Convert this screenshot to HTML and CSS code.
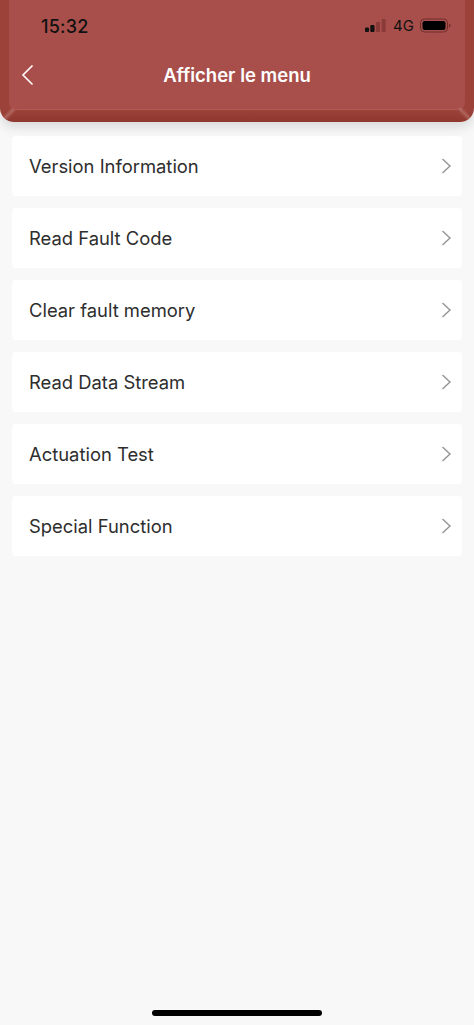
FILE: index.html
```html
<!DOCTYPE html>
<html lang="fr">
<head>
<meta charset="utf-8">
<title>Afficher le menu</title>
<link rel="stylesheet" href="styles.css">
</head>
<body>
<div class="app">
  <header class="header">
    <div class="face">
      <div class="status">
        <span class="time">15:32</span>
        <div class="status-right">
          <svg class="signal" width="21" height="14" viewBox="0 0 21 14">
            <rect x="0" y="8.500" width="4" height="4.500" rx="1" fill="#111"/>
            <rect x="5.300" y="6" width="4.200" height="7" rx="1" fill="#111"/>
            <rect x="11" y="3" width="4" height="10" rx="1" fill="#8a3a38"/>
            <rect x="16.700" y="0" width="4" height="13" rx="1" fill="#8a3a38"/>
          </svg>
          <span class="net">4G</span>
          <svg class="battery" width="31" height="15" viewBox="0 0 31 15">
            <rect x="0.500" y="1" width="27" height="13" rx="4" fill="none" stroke="#6f2e2c" stroke-width="1"/>
            <rect x="2.500" y="3" width="23" height="9" rx="2.300" fill="#000"/>
            <path d="M29 5.500c1 .4 1.500 1 1.500 2s-.5 1.600-1.500 2z" fill="#6f2e2c"/>
          </svg>
        </div>
      </div>
      <nav class="nav">
        <svg class="back" width="14" height="22" viewBox="0 0 14 22">
          <path d="M11.500 1.500 2 11l9.500 9.500" fill="none" stroke="#fff" stroke-width="1.600"/>
        </svg>
        <h1 class="title">Afficher le menu</h1>
      </nav>
    </div>
  </header>
  <main class="list">
    <div class="row"><span>Version Information</span><svg class="chev" width="11" height="16" viewBox="0 0 11 16"><path d="M1.500 1 9 8l-7.500 7" fill="none" stroke="#949494" stroke-width="1.400"/></svg></div>
    <div class="row"><span>Read Fault Code</span><svg class="chev" width="11" height="16" viewBox="0 0 11 16"><path d="M1.500 1 9 8l-7.500 7" fill="none" stroke="#949494" stroke-width="1.400"/></svg></div>
    <div class="row"><span>Clear fault memory</span><svg class="chev" width="11" height="16" viewBox="0 0 11 16"><path d="M1.500 1 9 8l-7.500 7" fill="none" stroke="#949494" stroke-width="1.400"/></svg></div>
    <div class="row"><span>Read Data Stream</span><svg class="chev" width="11" height="16" viewBox="0 0 11 16"><path d="M1.500 1 9 8l-7.500 7" fill="none" stroke="#949494" stroke-width="1.400"/></svg></div>
    <div class="row"><span>Actuation Test</span><svg class="chev" width="11" height="16" viewBox="0 0 11 16"><path d="M1.500 1 9 8l-7.500 7" fill="none" stroke="#949494" stroke-width="1.400"/></svg></div>
    <div class="row"><span>Special Function</span><svg class="chev" width="11" height="16" viewBox="0 0 11 16"><path d="M1.500 1 9 8l-7.500 7" fill="none" stroke="#949494" stroke-width="1.400"/></svg></div>
  </main>
  <div class="home-area"><div class="home-bar"></div></div>
</div>
</body>
</html>
```
FILE: styles.css
```css
* { box-sizing: border-box; }
html, body { margin: 0; padding: 0; height: 100%; }
body { background: #f8f8f8; font-family: Inter, "Liberation Sans", sans-serif; overflow: hidden; }
.app { height: 1025px; display: flex; flex-direction: column; }
.header {
  position: relative;
  height: 122px;
  flex: none;
  padding: 0 9px 12px;
  background: linear-gradient(180deg, #9c4239 0%, #9c4239 90%, #8f372f 100%);
  border-radius: 0 0 14px 14px;
  box-shadow: 0 5px 12px rgba(0, 0, 0, 0.13);
  overflow: hidden;
}
.header::before,
.header::after {
  content: "";
  position: absolute;
  bottom: 2px;
  width: 12px;
  height: 12px;
}
.header::before { left: 3px; background: linear-gradient(135deg, transparent 30%, rgba(190, 125, 118, 0.6) 50%, transparent 70%); }
.header::after { right: 3px; background: linear-gradient(45deg, transparent 30%, rgba(190, 125, 118, 0.6) 50%, transparent 70%); }
.face {
  position: relative;
  height: 110px;
  padding: 0 14px 0 12px;
  background: #a94f4b;
  border-bottom: 1px solid #b25a55;
  border-radius: 0 0 8px 8px;
  display: flex;
  flex-direction: column;
}
.status { height: 35px; padding: 17px 0 0 20px; display: flex; justify-content: space-between; align-items: center; }
.time { font-size: 18px; font-weight: 500; color: #111; letter-spacing: 0.2px; }
.status-right { display: flex; align-items: center; gap: 7px; margin-top: -1px; margin-left: -3px; }
.signal { display: block; }
.net { font-size: 15px; color: #111; }
.battery { display: block; margin-left: -1px; }
.nav { position: relative; height: 32px; margin-top: 24px; display: flex; align-items: center; justify-content: center; }
.back { position: absolute; left: 0; top: 5px; }
.title { margin: 0 0 0 2px; font-size: 18.500px; font-weight: 600; color: #fff; }
.list { padding: 14px 12px 0; display: flex; flex-direction: column; gap: 12px; }
.row {
  height: 60px;
  padding: 0 10px 1px 17px;
  background: #fff;
  border-radius: 4px;
  display: flex;
  justify-content: space-between;
  align-items: center;
  font-size: 18.400px;
  color: #2e2e2e;
}
.chev { display: block; }
.home-area { margin-top: auto; padding-bottom: 9px; display: flex; justify-content: center; }
.home-bar { width: 170px; height: 6px; border-radius: 3px; background: #000; }
```
